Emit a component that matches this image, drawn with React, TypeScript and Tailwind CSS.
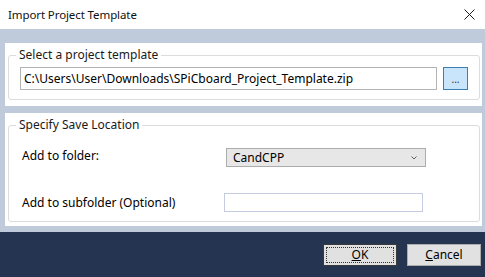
import React from 'react'

const font = { fontFamily: '"Noto Sans", "Open Sans", sans-serif' }

function CloseIcon() {
  return (
    <svg width="11" height="11" viewBox="0 0 11 11" className="block">
      <path d="M0.5 0.5 L10.5 10.5 M10.5 0.5 L0.5 10.5" stroke="#1a1a1a" strokeWidth="1" fill="none" />
    </svg>
  )
}

function Chevron() {
  return (
    <svg width="6" height="4" viewBox="0 0 6 4" className="block">
      <path d="M0.5 0.5 L3 3 L5.5 0.5" stroke="#606060" strokeWidth="1" fill="none" />
    </svg>
  )
}

function GroupBox({ title, children }: { title: string; children: React.ReactNode }) {
  return (
    <fieldset className="ml-[3px] mr-[2px] mt-[5px] rounded-[3px] border border-[#dcdcdc] min-w-0">
      <legend className="ml-[7px] px-[3px] text-[12px] leading-[14px] text-[#1a1a1a]">{title}</legend>
      {children}
    </fieldset>
  )
}

export default function App() {
  return (
    <div className="w-[485px] h-[277px] flex flex-col bg-[#bfcbdb] text-black overflow-hidden" style={font}>
      {/* title bar */}
      <div className="h-[29px] bg-white flex items-center justify-between pl-[8px] pr-[10px]">
        <span className="text-[11.5px] leading-none text-[#111] tracking-[-0.1px]">Import Project Template</span>
        <CloseIcon />
      </div>

      <div className="flex-1 flex flex-col pl-[5px] pr-[3px] pt-[14px] gap-[7px]">
        {/* template panel */}
        <div className="bg-white h-[63px] flex flex-col">
          <GroupBox title="Select a project template">
            <div className="flex items-center pl-[11px] pt-[5px] pb-[9px] gap-[6px]">
              <div className="w-[417px] h-[23px] border border-[#b4b4b4] flex items-center pl-[3px] text-[12px] whitespace-nowrap overflow-hidden">
                C:\Users\User\Downloads\SPiCboard_Project_Template.zip
              </div>
              <div className="w-[25px] h-[23px] border border-[#3c7fb1] bg-[#c9e5fb] flex items-end justify-center pb-[5px] text-[10px] leading-none text-[#333]">
                ...
              </div>
            </div>
          </GroupBox>
        </div>

        {/* save location panel */}
        <div className="bg-white h-[113px] flex flex-col">
          <GroupBox title="Specify Save Location">
            <div className="flex flex-col pl-[13px] pt-[16px] pb-[9px] gap-[26px]">
              <div className="flex items-center">
                <span className="w-[204px] text-[12px] leading-none -mt-[4px]">Add to folder:</span>
                <div className="w-[200px] h-[19px] border border-[#acacac] bg-[#e7e7e7] flex items-center justify-between pl-[6px] pr-[8px] text-[12px]">
                  <span>CandCPP</span>
                  <Chevron />
                </div>
              </div>
              <div className="flex items-center">
                <span className="w-[202px] text-[12px] leading-none">Add to subfolder (Optional)</span>
                <div className="w-[199px] h-[19px] border border-[#c5cbe0] bg-white" />
              </div>
            </div>
          </GroupBox>
        </div>
      </div>

      {/* footer */}
      <div className="h-[45px] mt-[6px] bg-[#253551] flex justify-end items-start pt-[12px] pr-[4px] gap-[10px]">
        <div className="w-[74px] h-[22px] border border-[#3a3a3a] bg-[#e1e1e1] p-[2px]">
          <div className="w-full h-full border border-dotted border-[#333] flex items-center justify-center text-[12px] leading-none">
            <span><u>O</u>K</span>
          </div>
        </div>
        <div className="w-[74px] h-[22px] border border-[#adadad] bg-[#e1e1e1] flex items-center justify-center text-[12px] leading-none">
          <span><u>C</u>ancel</span>
        </div>
      </div>
    </div>
  )
}
